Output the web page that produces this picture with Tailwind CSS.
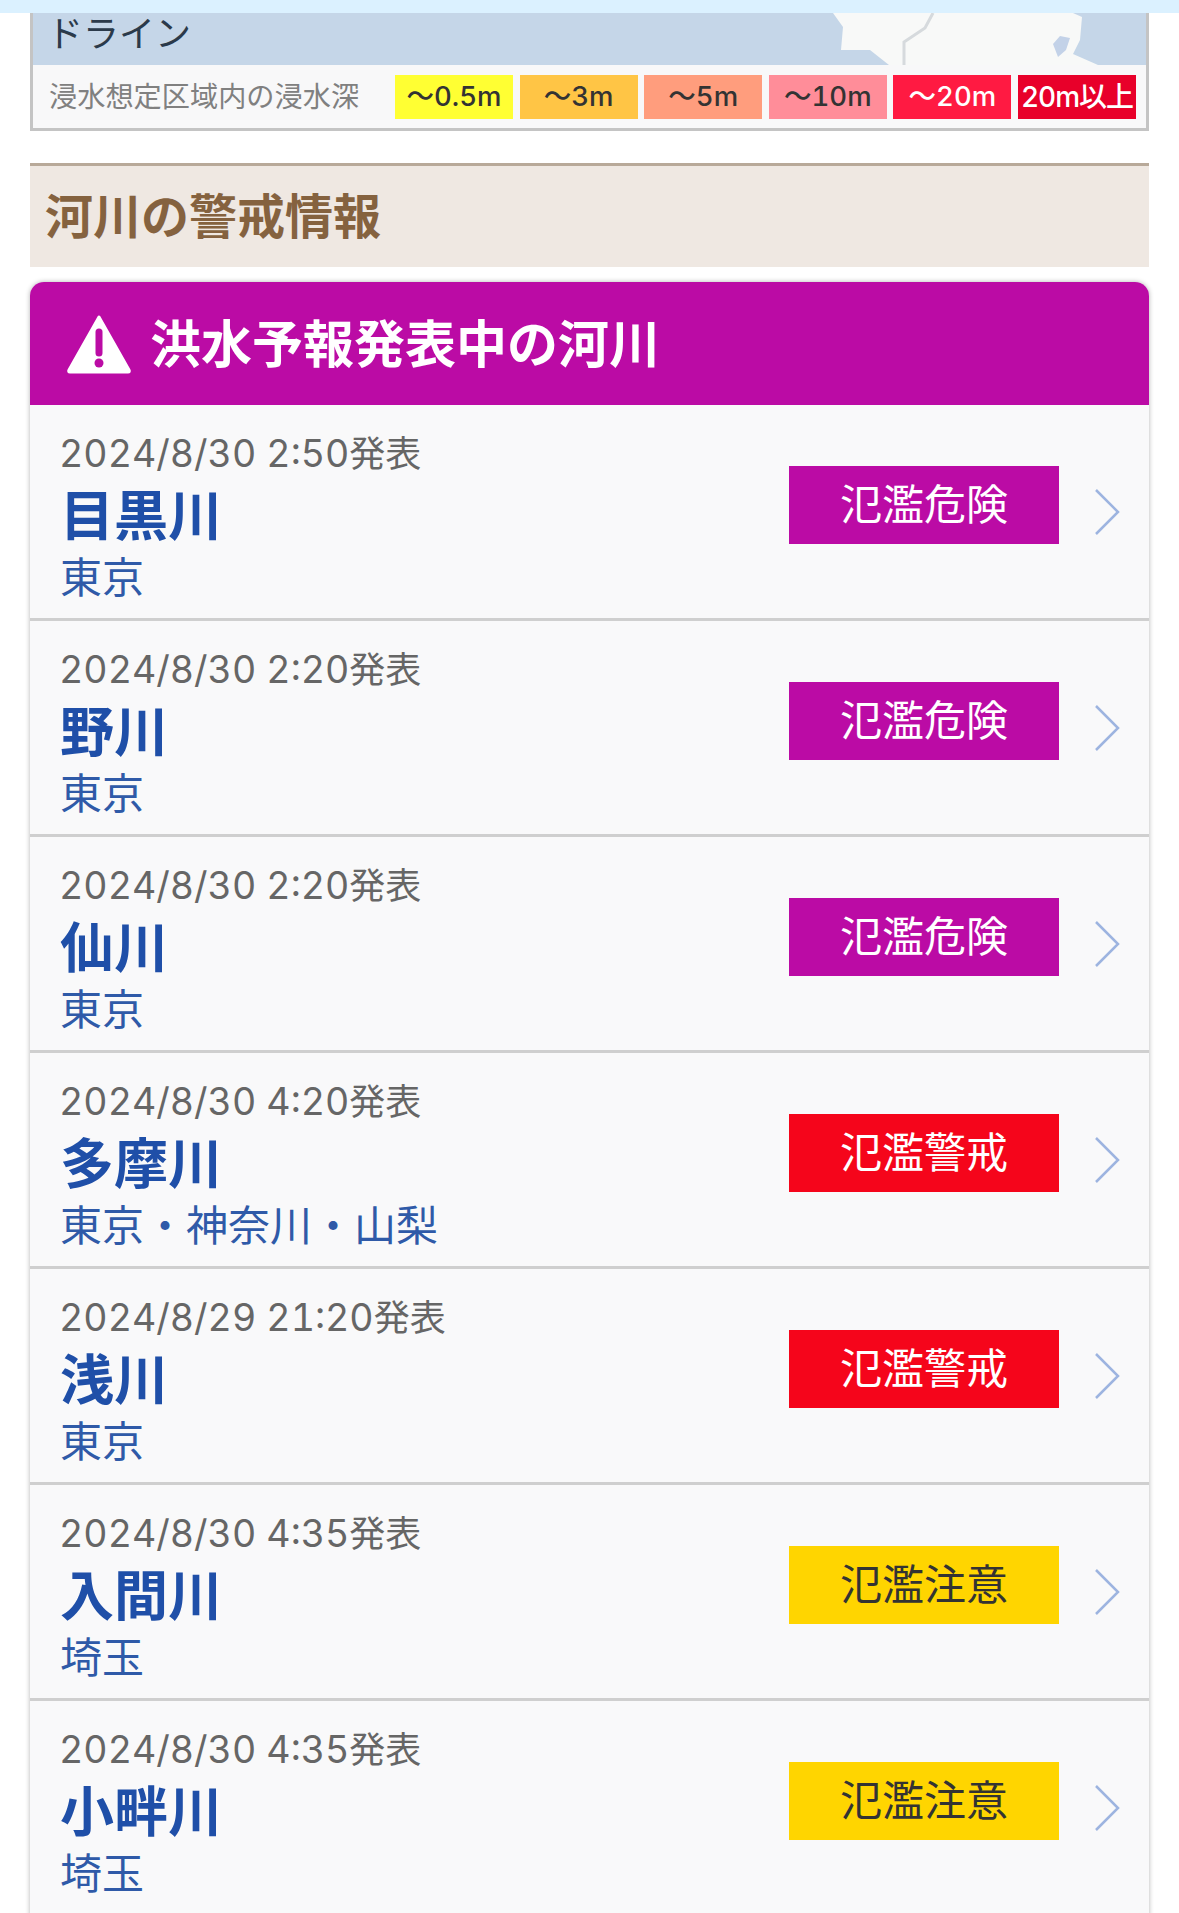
<!DOCTYPE html>
<html lang="ja">
<head>
    <meta charset="UTF-8">
    <meta name="viewport" content="width=device-width, initial-scale=1.0">
    <title>河川の警戒情報</title>
    <script src="https://cdn.jsdelivr.net/npm/@tailwindcss/browser@4"></script>
</head>
<body class="bg-white h-[1913px] overflow-hidden font-['Inter','Noto_Sans_CJK_JP',sans-serif]">
    <!-- Top bar -->
    <div class="h-[13px] bg-[#dbf1ff]"></div>

    <div class="px-[30px]">
        <!-- Map legend -->
        <div class="border-x-[3px] border-b-[3px] border-[#c4c4c4]">
            <div class="relative h-[52px] bg-[#c5d6e8] overflow-hidden">
                <svg class="absolute top-0 left-0" width="1113" height="52" viewBox="33 13 1113 52">
                    <path d="M833 13 L843 27 L841 50 L870 50 L889 65 L1098 65 L1073 54 L1080 40 L1082 17 L1073 13 Z" fill="#f8f9f8"/>
                    <path d="M933 13 L925 28 L904 42 L904 65" fill="none" stroke="#d6dadd" stroke-width="3"/>
                    <path d="M1053 44 L1060 36 L1070 38 L1066 50 L1058 57 Z" fill="#c3d2e8"/>
                </svg>
                <span class="absolute left-[14px] top-[1px] text-[36px] leading-[40px] text-[#2b3a4a]">ドライン</span>
            </div>
            <div class="flex items-center h-[63px] bg-[#f8f8f9] pl-[16px]">
                <span class="w-[346px] mt-[2px] text-[28.2px] leading-none text-[#808080] whitespace-nowrap">浸水想定区域内の浸水深</span>
                <div class="flex gap-[6.6px] tabular-nums">
                    <span class="w-[118px] h-[44px] flex items-center justify-center text-[27.5px] font-medium bg-[#ffff33] text-[#333]">〜0.5m</span>
                    <span class="w-[118px] h-[44px] flex items-center justify-center text-[27.5px] font-medium bg-[#ffc545] text-[#333]">〜3m</span>
                    <span class="w-[118px] h-[44px] flex items-center justify-center text-[27.5px] font-medium bg-[#ff9d7d] text-[#333]">〜5m</span>
                    <span class="w-[118px] h-[44px] flex items-center justify-center text-[27.5px] font-medium bg-[#ff8d99] text-[#333]">〜10m</span>
                    <span class="w-[118px] h-[44px] flex items-center justify-center text-[27.5px] font-medium bg-[#ff1a42] text-white">〜20m</span>
                    <span class="w-[118px] h-[44px] flex items-center justify-center text-[28px] font-medium bg-[#e8002a] text-white tracking-[-1px] whitespace-nowrap">20m以上</span>
                </div>
            </div>
        </div>

        <!-- Section heading -->
        <h2 class="mt-[32px] h-[104px] flex items-center pl-[15px] bg-[#efe8e2] border-t-[3px] border-[#b8a999] text-[48px] font-bold text-[#85623f]">河川の警戒情報</h2>

        <!-- River list -->
        <div class="mt-[15px] rounded-t-[14px] bg-[#f9f9fa] shadow-[0_0_5px_rgba(0,0,0,0.3)]">
            <div class="flex items-center h-[123px] pl-[36px] gap-[18px] rounded-t-[14px] bg-[#bb0ba5]">
                <svg width="66" height="60" viewBox="0 0 66 60">
                    <path d="M33 3 L63 56 Q64 58 62 58 L4 58 Q2 58 3 56 Z" fill="#fff" stroke="#fff" stroke-width="3" stroke-linejoin="round"/>
                    <path d="M33 18 L33 39" stroke="#bb0ba5" stroke-width="7" stroke-linecap="round"/>
                    <circle cx="33" cy="49" r="4.5" fill="#bb0ba5"/>
                </svg>
                <span class="mt-[4px] text-[51px] font-bold text-white whitespace-nowrap">洪水予報発表中の河川</span>
            </div>

            <div class="flex h-[216px] border-b-[3px] border-[#cfcfcf] pl-[30px]">
                <div class="pt-[27px]">
                    <p class="-ml-[1px] text-[37.5px] leading-[44px] tabular-nums text-[#666]">2024/8/30 2:50<span class="text-[36px]">発表</span></p>
                    <p class="mt-[9px] text-[54px] leading-[64px] font-bold text-[#1f4fa8]">目黒川</p>
                    <p class="text-[42px] leading-[58px] text-[#2f5aa8]">東京</p>
                </div>
                <span class="ml-auto mt-[61px] w-[270px] h-[78px] flex items-center justify-center pb-[2px] text-[42px] bg-[#bb0ba5] text-white">氾濫危険</span>
                <svg class="ml-[35px] mr-[29px] mt-[83px]" width="26" height="48" viewBox="0 0 26 48"><path d="M2 2 L24 24 L2 46" fill="none" stroke="#9db4e0" stroke-width="2.5"/></svg>
            </div>
            <div class="flex h-[216px] border-b-[3px] border-[#cfcfcf] pl-[30px]">
                <div class="pt-[27px]">
                    <p class="-ml-[1px] text-[37.5px] leading-[44px] tabular-nums text-[#666]">2024/8/30 2:20<span class="text-[36px]">発表</span></p>
                    <p class="mt-[9px] text-[54px] leading-[64px] font-bold text-[#1f4fa8]">野川</p>
                    <p class="text-[42px] leading-[58px] text-[#2f5aa8]">東京</p>
                </div>
                <span class="ml-auto mt-[61px] w-[270px] h-[78px] flex items-center justify-center pb-[2px] text-[42px] bg-[#bb0ba5] text-white">氾濫危険</span>
                <svg class="ml-[35px] mr-[29px] mt-[83px]" width="26" height="48" viewBox="0 0 26 48"><path d="M2 2 L24 24 L2 46" fill="none" stroke="#9db4e0" stroke-width="2.5"/></svg>
            </div>
            <div class="flex h-[216px] border-b-[3px] border-[#cfcfcf] pl-[30px]">
                <div class="pt-[27px]">
                    <p class="-ml-[1px] text-[37.5px] leading-[44px] tabular-nums text-[#666]">2024/8/30 2:20<span class="text-[36px]">発表</span></p>
                    <p class="mt-[9px] text-[54px] leading-[64px] font-bold text-[#1f4fa8]">仙川</p>
                    <p class="text-[42px] leading-[58px] text-[#2f5aa8]">東京</p>
                </div>
                <span class="ml-auto mt-[61px] w-[270px] h-[78px] flex items-center justify-center pb-[2px] text-[42px] bg-[#bb0ba5] text-white">氾濫危険</span>
                <svg class="ml-[35px] mr-[29px] mt-[83px]" width="26" height="48" viewBox="0 0 26 48"><path d="M2 2 L24 24 L2 46" fill="none" stroke="#9db4e0" stroke-width="2.5"/></svg>
            </div>
            <div class="flex h-[216px] border-b-[3px] border-[#cfcfcf] pl-[30px]">
                <div class="pt-[27px]">
                    <p class="-ml-[1px] text-[37.5px] leading-[44px] tabular-nums text-[#666]">2024/8/30 4:20<span class="text-[36px]">発表</span></p>
                    <p class="mt-[9px] text-[54px] leading-[64px] font-bold text-[#1f4fa8]">多摩川</p>
                    <p class="text-[42px] leading-[58px] text-[#2f5aa8]">東京・神奈川・山梨</p>
                </div>
                <span class="ml-auto mt-[61px] w-[270px] h-[78px] flex items-center justify-center pb-[2px] text-[42px] bg-[#f5051b] text-white">氾濫警戒</span>
                <svg class="ml-[35px] mr-[29px] mt-[83px]" width="26" height="48" viewBox="0 0 26 48"><path d="M2 2 L24 24 L2 46" fill="none" stroke="#9db4e0" stroke-width="2.5"/></svg>
            </div>
            <div class="flex h-[216px] border-b-[3px] border-[#cfcfcf] pl-[30px]">
                <div class="pt-[27px]">
                    <p class="-ml-[1px] text-[37.5px] leading-[44px] tabular-nums text-[#666]">2024/8/29 21:20<span class="text-[36px]">発表</span></p>
                    <p class="mt-[9px] text-[54px] leading-[64px] font-bold text-[#1f4fa8]">浅川</p>
                    <p class="text-[42px] leading-[58px] text-[#2f5aa8]">東京</p>
                </div>
                <span class="ml-auto mt-[61px] w-[270px] h-[78px] flex items-center justify-center pb-[2px] text-[42px] bg-[#f5051b] text-white">氾濫警戒</span>
                <svg class="ml-[35px] mr-[29px] mt-[83px]" width="26" height="48" viewBox="0 0 26 48"><path d="M2 2 L24 24 L2 46" fill="none" stroke="#9db4e0" stroke-width="2.5"/></svg>
            </div>
            <div class="flex h-[216px] border-b-[3px] border-[#cfcfcf] pl-[30px]">
                <div class="pt-[27px]">
                    <p class="-ml-[1px] text-[37.5px] leading-[44px] tabular-nums text-[#666]">2024/8/30 4:35<span class="text-[36px]">発表</span></p>
                    <p class="mt-[9px] text-[54px] leading-[64px] font-bold text-[#1f4fa8]">入間川</p>
                    <p class="text-[42px] leading-[58px] text-[#2f5aa8]">埼玉</p>
                </div>
                <span class="ml-auto mt-[61px] w-[270px] h-[78px] flex items-center justify-center pb-[2px] text-[42px] bg-[#ffd500] text-[#333]">氾濫注意</span>
                <svg class="ml-[35px] mr-[29px] mt-[83px]" width="26" height="48" viewBox="0 0 26 48"><path d="M2 2 L24 24 L2 46" fill="none" stroke="#9db4e0" stroke-width="2.5"/></svg>
            </div>
            <div class="flex h-[216px] border-b-[3px] border-[#cfcfcf] pl-[30px]">
                <div class="pt-[27px]">
                    <p class="-ml-[1px] text-[37.5px] leading-[44px] tabular-nums text-[#666]">2024/8/30 4:35<span class="text-[36px]">発表</span></p>
                    <p class="mt-[9px] text-[54px] leading-[64px] font-bold text-[#1f4fa8]">小畔川</p>
                    <p class="text-[42px] leading-[58px] text-[#2f5aa8]">埼玉</p>
                </div>
                <span class="ml-auto mt-[61px] w-[270px] h-[78px] flex items-center justify-center pb-[2px] text-[42px] bg-[#ffd500] text-[#333]">氾濫注意</span>
                <svg class="ml-[35px] mr-[29px] mt-[83px]" width="26" height="48" viewBox="0 0 26 48"><path d="M2 2 L24 24 L2 46" fill="none" stroke="#9db4e0" stroke-width="2.5"/></svg>
            </div>
        </div>
    </div>
</body>
</html>
